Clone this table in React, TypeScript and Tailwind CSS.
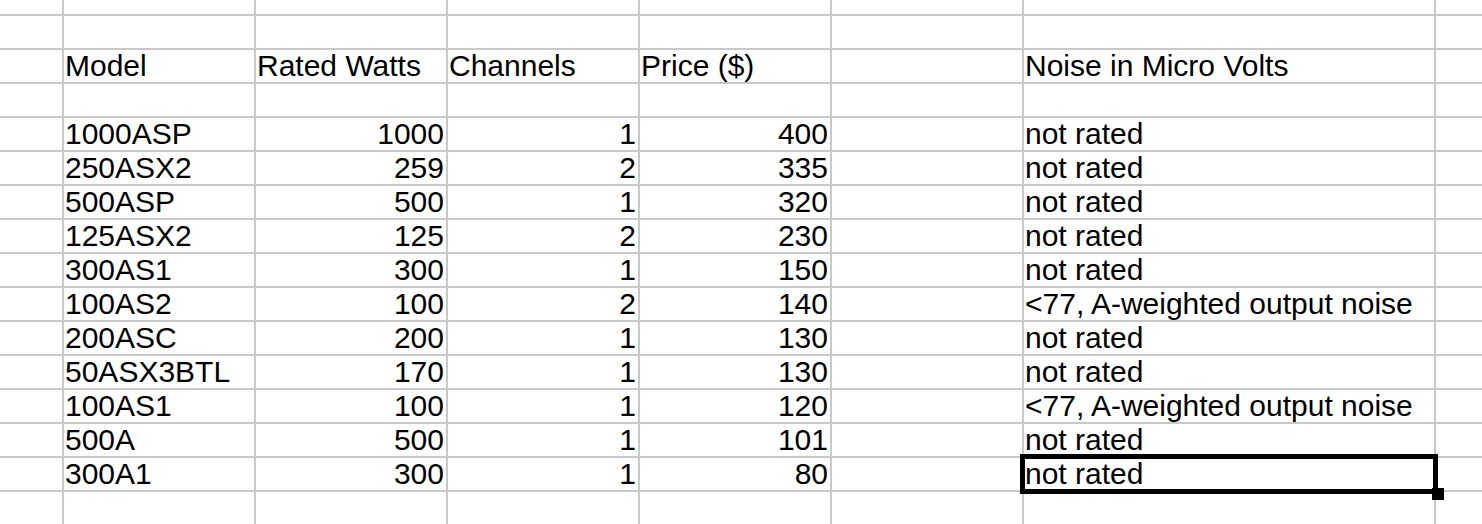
import React from "react";

type Row = [string, string, string, string, string, string];

const header: Row = ["Model", "Rated Watts", "Channels", "Price ($)", "", "Noise in Micro Volts"];

const data: Row[] = [
  ["1000ASP", "1000", "1", "400", "", "not rated"],
  ["250ASX2", "259", "2", "335", "", "not rated"],
  ["500ASP", "500", "1", "320", "", "not rated"],
  ["125ASX2", "125", "2", "230", "", "not rated"],
  ["300AS1", "300", "1", "150", "", "not rated"],
  ["100AS2", "100", "2", "140", "", "<77, A-weighted output noise"],
  ["200ASC", "200", "1", "130", "", "not rated"],
  ["50ASX3BTL", "170", "1", "130", "", "not rated"],
  ["100AS1", "100", "1", "120", "", "<77, A-weighted output noise"],
  ["500A", "500", "1", "101", "", "not rated"],
  ["300A1", "300", "1", "80", "", "not rated"],
];

const cellBase =
  "bg-white whitespace-nowrap text-[30px] leading-[32px] text-black overflow-visible relative";

function EmptyRow({ k }: { k: string }) {
  return (
    <>
      {Array.from({ length: 8 }).map((_, i) => (
        <div key={k + i} className="bg-white" />
      ))}
    </>
  );
}

function DataRow({ r, header: isHeader, selected }: { r: Row; header?: boolean; selected?: boolean }) {
  return (
    <>
      <div className="bg-white" />
      {r.map((v, i) => {
        const right = !isHeader && (i === 1 || i === 2 || i === 3);
        return (
          <div
            key={i}
            className={
              cellBase +
              (right ? " text-right pr-[2px]" : " text-left pl-[1px]")
            }
          >
            {v}
            {selected && i === 5 ? (
              <>
                <div className="absolute left-[-4px] top-[-4px] right-[-4px] bottom-[-4px] border-[5px] border-black z-10 pointer-events-none" />
                <div className="absolute left-[408px] top-[30px] w-[12px] h-[12px] bg-black z-20" />
              </>
            ) : null}
          </div>
        );
      })}
      <div className="bg-white" />
    </>
  );
}

export default function App() {
  return (
    <div
      className="w-[1482px] h-[524px] overflow-hidden bg-white"
      style={{ fontFamily: '"Liberation Sans", Arial, sans-serif' }}
    >
      <div className="grid h-[524px] w-[1482px] gap-[2px] bg-[#c8c8c8] grid-cols-[62px_190px_190px_190px_190px_190px_410px_1fr] grid-rows-[14px_repeat(15,32px)]">
        <EmptyRow k="r0" />
        <EmptyRow k="r1" />
        <DataRow r={header} header />
        <EmptyRow k="r3" />
        {data.map((r, i) => (
          <DataRow key={i} r={r} selected={i === data.length - 1} />
        ))}
        <EmptyRow k="r15" />
      </div>
    </div>
  );
}
